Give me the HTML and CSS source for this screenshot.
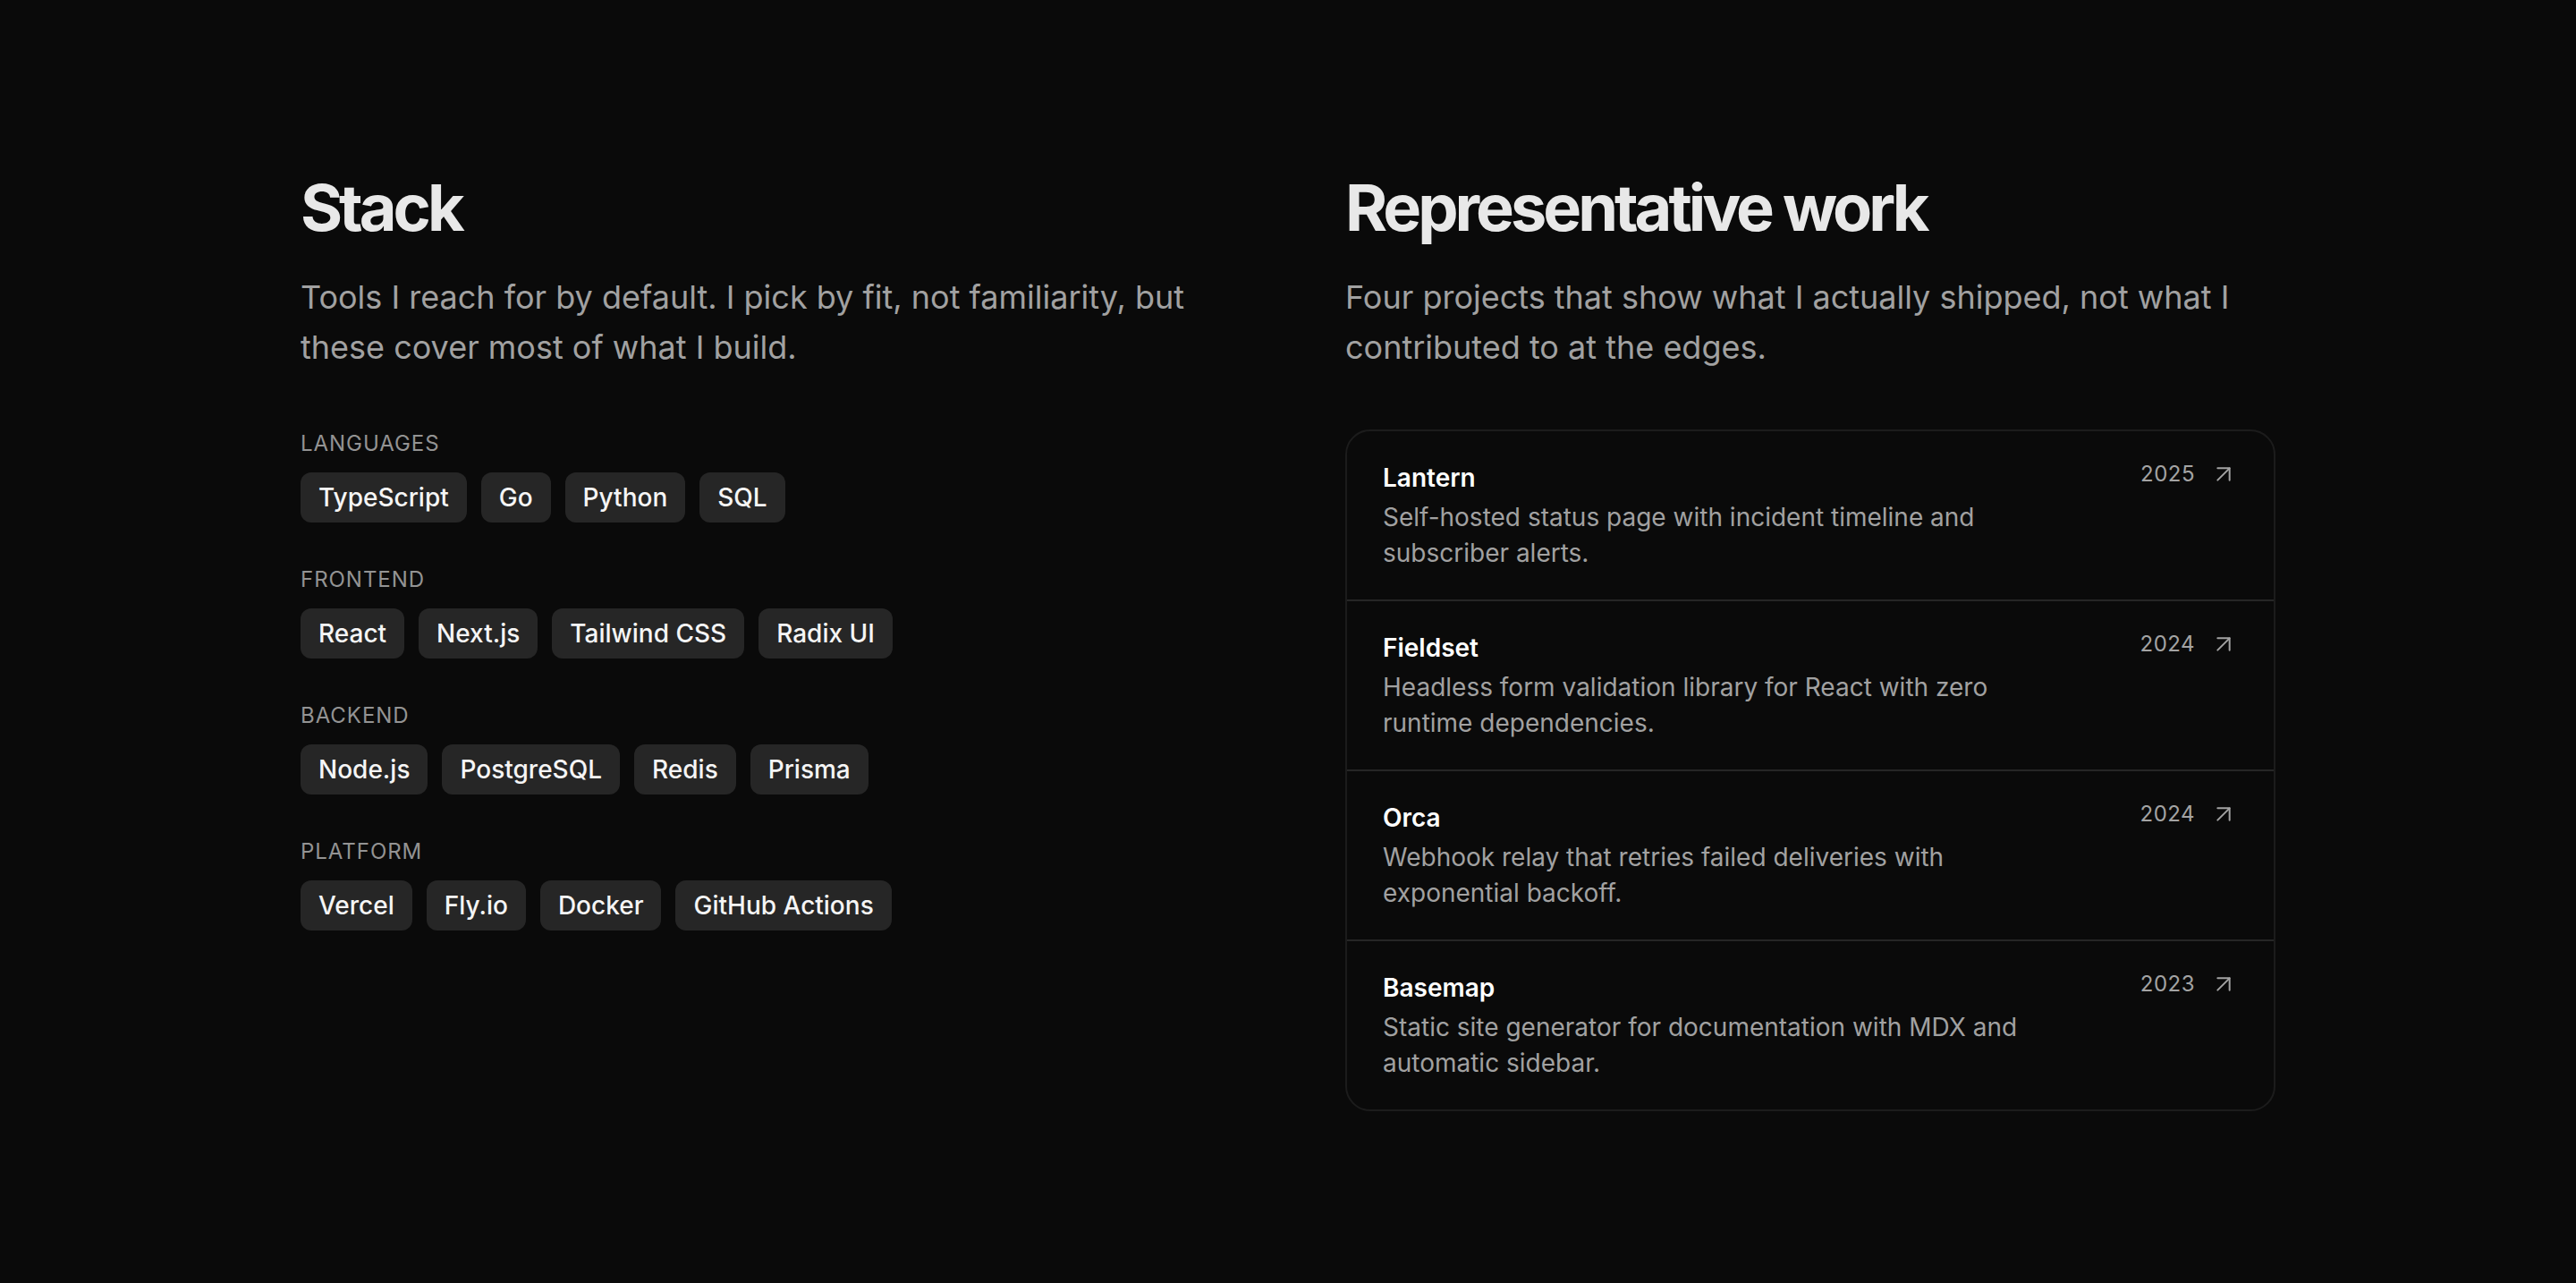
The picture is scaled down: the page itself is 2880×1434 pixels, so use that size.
FILE: index.html
```html
<!DOCTYPE html>
<html lang="en">
<head>
<meta charset="utf-8">
<title>Stack &amp; Work</title>
<link rel="stylesheet" href="styles.css">
</head>
<body>
<main class="container">
  <div class="grid">
    <section class="col">
      <h2 class="heading">Stack</h2>
      <p class="lead">Tools I reach for by default. I pick by fit, not familiarity, but these cover most of what I build.</p>
      <div class="groups">
        <div class="group">
          <div class="label">Languages</div>
          <div class="chips">
            <span class="chip">TypeScript</span><span class="chip">Go</span><span class="chip">Python</span><span class="chip">SQL</span>
          </div>
        </div>
        <div class="group">
          <div class="label">Frontend</div>
          <div class="chips">
            <span class="chip">React</span><span class="chip">Next.js</span><span class="chip">Tailwind CSS</span><span class="chip">Radix UI</span>
          </div>
        </div>
        <div class="group">
          <div class="label">Backend</div>
          <div class="chips">
            <span class="chip">Node.js</span><span class="chip">PostgreSQL</span><span class="chip">Redis</span><span class="chip">Prisma</span>
          </div>
        </div>
        <div class="group">
          <div class="label">Platform</div>
          <div class="chips">
            <span class="chip">Vercel</span><span class="chip">Fly.io</span><span class="chip">Docker</span><span class="chip">GitHub Actions</span>
          </div>
        </div>
      </div>
    </section>
    <section class="col">
      <h2 class="heading">Representative work</h2>
      <p class="lead">Four projects that show what I actually shipped, not what I contributed to at the edges.</p>
      <div class="card">
        <a class="row" href="#">
          <div class="info">
            <div class="title">Lantern</div>
            <div class="desc">Self-hosted status page with incident timeline and subscriber alerts.</div>
          </div>
          <div class="meta"><span class="year">2025</span><svg class="arrow" viewBox="0 0 24 24" fill="none" stroke="currentColor" stroke-width="1.5" stroke-linecap="round" stroke-linejoin="round"><path d="M7 7h10v10"/><path d="M7 17 17 7"/></svg></div>
        </a>
        <a class="row" href="#">
          <div class="info">
            <div class="title">Fieldset</div>
            <div class="desc">Headless form validation library for React with zero runtime dependencies.</div>
          </div>
          <div class="meta"><span class="year">2024</span><svg class="arrow" viewBox="0 0 24 24" fill="none" stroke="currentColor" stroke-width="1.5" stroke-linecap="round" stroke-linejoin="round"><path d="M7 7h10v10"/><path d="M7 17 17 7"/></svg></div>
        </a>
        <a class="row" href="#">
          <div class="info">
            <div class="title">Orca</div>
            <div class="desc">Webhook relay that retries failed deliveries with exponential backoff.</div>
          </div>
          <div class="meta"><span class="year">2024</span><svg class="arrow" viewBox="0 0 24 24" fill="none" stroke="currentColor" stroke-width="1.5" stroke-linecap="round" stroke-linejoin="round"><path d="M7 7h10v10"/><path d="M7 17 17 7"/></svg></div>
        </a>
        <a class="row" href="#">
          <div class="info">
            <div class="title">Basemap</div>
            <div class="desc">Static site generator for documentation with MDX and automatic sidebar.</div>
          </div>
          <div class="meta"><span class="year">2023</span><svg class="arrow" viewBox="0 0 24 24" fill="none" stroke="currentColor" stroke-width="1.5" stroke-linecap="round" stroke-linejoin="round"><path d="M7 7h10v10"/><path d="M7 17 17 7"/></svg></div>
        </a>
      </div>
    </section>
  </div>
</main>
</body>
</html>
```
FILE: styles.css
```css
* { box-sizing: border-box; }
html, body {
  margin: 0;
  padding: 0;
  background: #0a0a0a;
  color: #e5e5e5;
  font-family: Inter, "Noto Sans", "Liberation Sans", sans-serif;
  -webkit-font-smoothing: antialiased;
}
.container {
  max-width: 2304px;
  margin: 0 auto;
  padding: 192px 48px 192px;
}
.grid {
  display: grid;
  grid-template-columns: 1fr 1fr;
  column-gap: 128px;
}
.col { min-width: 0; }
.heading {
  margin: 0;
  font-size: 72px;
  line-height: 80px;
  font-weight: 700;
  letter-spacing: -0.056em;
  color: #e8e8e8;
}
.lead {
  margin: 32px 0 0;
  font-size: 36px;
  line-height: 56px;
  color: #a1a1a1;
}
.groups {
  margin-top: 64px;
  display: flex;
  flex-direction: column;
  gap: 48px;
}
.label {
  font-size: 24px;
  line-height: 32px;
  text-transform: uppercase;
  letter-spacing: 0.04em;
  color: #939393;
  margin-bottom: 16px;
}
.chips {
  display: flex;
  flex-wrap: wrap;
  gap: 16px;
}
.chip {
  display: inline-block;
  padding: 8px 20px;
  font-size: 28px;
  line-height: 40px;
  font-weight: 500;
  color: #f5f5f5;
  background: #262626;
  border-radius: 12px;
}
.card {
  margin-top: 64px;
  border: 2px solid #1c1c1c;
  border-radius: 28px;
  overflow: hidden;
}
.row {
  display: flex;
  justify-content: space-between;
  align-items: flex-start;
  gap: 32px;
  padding: 32px 40px;
  text-decoration: none;
  color: inherit;
}
.row + .row { border-top: 2px solid #262626; }
.title {
  font-size: 28px;
  line-height: 40px;
  font-weight: 600;
  color: #ffffff;
}
.desc {
  margin-top: 4px;
  max-width: 768px;
  font-size: 28px;
  line-height: 40px;
  color: #a1a1a1;
}
.meta {
  display: flex;
  align-items: center;
  gap: 16px;
  color: #a3a3a3;
  flex-shrink: 0;
}
.year {
  font-size: 24px;
  line-height: 32px;
  letter-spacing: 0.02em;
}
.arrow {
  width: 32px;
  height: 32px;
  display: block;
}
```
